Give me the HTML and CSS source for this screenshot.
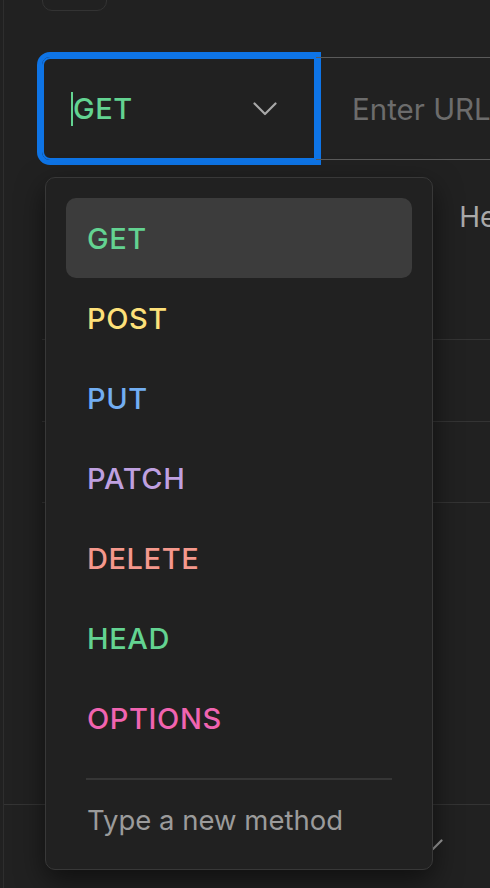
FILE: index.html
```html
<!DOCTYPE html>
<html lang="en">
<head>
<meta charset="utf-8">
<title>Request</title>
<link rel="stylesheet" href="styles.css">
</head>
<body>
<div class="app">
  <div class="top-stub"></div>
  <div class="request-bar">
    <div class="method-select">
      <span class="caret"></span>
      <span class="method-label">GET</span>
      <svg class="chev" width="24" height="14" viewBox="0 0 24 14" aria-hidden="true"><path d="M1.5 1.5 L12 12 L22.5 1.5" fill="none" stroke="#a8a8a8" stroke-width="2.2" stroke-linecap="round" stroke-linejoin="round"/></svg>
    </div>
    <div class="url-input">Enter URL</div>
  </div>
  <div class="tabs">
    <span class="tab">Params</span>
    <span class="tab">Headers</span>
  </div>
  <div class="rows">
    <div class="row"></div>
    <div class="row"></div>
  </div>
  <div class="body-area"></div>
  <div class="footer">
    <svg class="foot-chev" width="20" height="12" viewBox="0 0 20 12" aria-hidden="true"><path d="M1.5 1.5 L10 10 L18.5 1.5" fill="none" stroke="#9c9c9c" stroke-width="2.2" stroke-linecap="round" stroke-linejoin="round"/></svg>
  </div>

  <div class="menu">
    <div class="item active get">GET</div>
    <div class="item post">POST</div>
    <div class="item put">PUT</div>
    <div class="item patch">PATCH</div>
    <div class="item delete">DELETE</div>
    <div class="item head">HEAD</div>
    <div class="item options">OPTIONS</div>
    <div class="divider"></div>
    <div class="new-method">Type a new method</div>
  </div>
</div>
</body>
</html>
```

FILE: styles.css
```css
* { box-sizing: border-box; }

html, body {
  margin: 0;
  padding: 0;
  background: #212121;
  height: 888px;
  overflow: hidden;
}

body {
  font-family: Inter, "Noto Sans", "Liberation Sans", sans-serif;
}

.app {
  position: relative;
  display: flow-root;
  margin-left: 3px;
  border-left: 1px solid #2e2e2e;
  height: 888px;
  padding-left: 38px;
}

.top-stub {
  width: 65px;
  height: 40px;
  margin-top: -29px;
  border: 1px solid #333333;
  border-radius: 10px;
}

.request-bar {
  display: flex;
  margin-top: 46px;
  height: 103px;
}

.method-select {
  width: 274px;
  flex: none;
  display: flex;
  align-items: center;
  border: 2px solid #0e74e6;
  outline: 5px solid #0e74e6;
  border-radius: 8px 0 0 8px;
  padding-left: 27px;
  padding-right: 37px;
}

.caret {
  width: 2px;
  height: 34px;
  background: #63d391;
}

.method-label {
  color: #63d391;
  font-size: 29px;
  font-weight: 500;
  letter-spacing: 0.6px;
}

.chev {
  margin-left: auto;
}

.url-input {
  flex: 1;
  border-top: 1px solid #5a5a5a;
  border-bottom: 1px solid #5a5a5a;
  display: flex;
  align-items: center;
  padding-left: 36px;
  color: #6c6c6c;
  font-size: 29.5px;
  white-space: nowrap;
  overflow: hidden;
}

.tabs {
  display: flex;
  gap: 40px;
  padding-left: 278px;
  height: 180px;
  padding-top: 40px;
  border-bottom: 1px solid #343434;
  color: #a9a9a9;
  font-size: 28px;
  white-space: nowrap;
  overflow: hidden;
}

.row {
  height: 82px;
  border-bottom: 1px solid #343434;
}

.row:last-child { height: 81px; }

.body-area {
  height: 302px;
  border-bottom: 1px solid #343434;
  margin-left: -38px;
}

.footer {
  display: flex;
  justify-content: flex-end;
  padding-right: 47px;
  padding-top: 34px;
}

.menu {
  position: absolute;
  left: 41px;
  top: 177px;
  width: 388px;
  height: 693px;
  background: #212121;
  border: 1px solid #383838;
  border-radius: 10px;
  padding: 20px 20px 9px;
  box-shadow: 0 10px 28px rgba(0, 0, 0, 0.55);
}

.item {
  height: 80px;
  display: flex;
  align-items: center;
  padding-left: 21px;
  font-size: 29px;
  font-weight: 500;
  letter-spacing: 0.6px;
  border-radius: 10px;
}

.item.active { background: #3c3c3c; }

.get { color: #63d391; }
.post { color: #fde07a; }
.put { color: #72aef2; }
.patch { color: #bfa0e0; }
.delete { color: #f5988c; }
.head { color: #63d391; }
.options { color: #f064b0; }

.divider {
  height: 2px;
  background: #363636;
  margin: 20px 20px 0;
}

.new-method {
  height: 80px;
  display: flex;
  align-items: center;
  padding-left: 21px;
  color: #9b9b9b;
  font-size: 27.5px;
}
```
